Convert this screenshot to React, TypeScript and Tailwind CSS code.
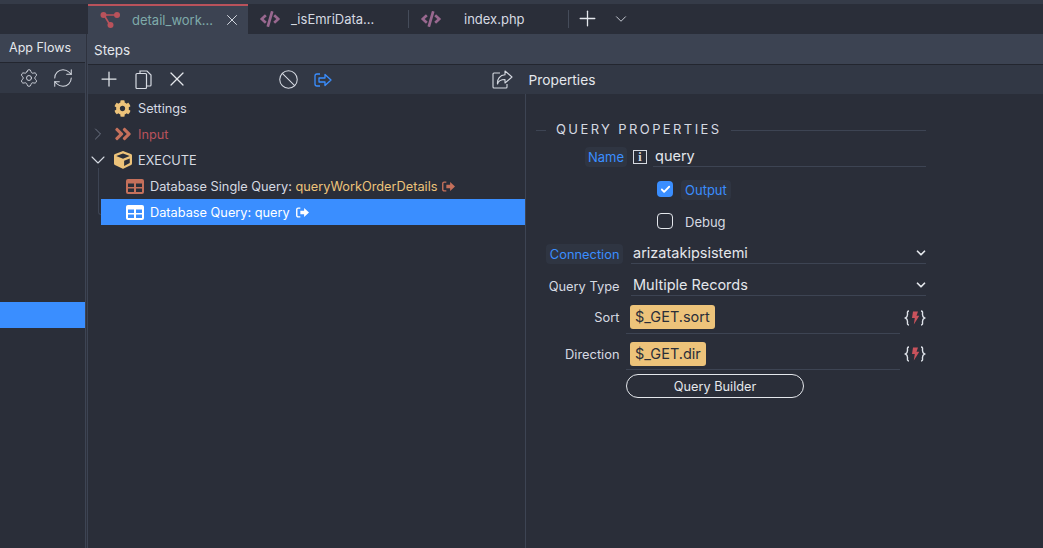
import React from "react";
import { FaCog, FaCube, FaAngleDoubleRight, FaCode } from "react-icons/fa";
import { Settings, RefreshCw, Ban, Plus, X, ChevronDown, ChevronRight, Check } from "lucide-react";

function FlowIcon() {
  return (
    <svg width="20" height="18" viewBox="0 0 20 18" fill="#b9525b" stroke="#b9525b">
      <path d="M4 4H16M4 4L10 14" strokeWidth="1.6" fill="none" />
      <circle cx="3.5" cy="4" r="3" stroke="none" />
      <circle cx="17" cy="4" r="3" stroke="none" />
      <circle cx="10.5" cy="14" r="3" stroke="none" />
    </svg>
  );
}

function CopyIcon() {
  return (
    <svg width="17" height="20" viewBox="0 0 17 20" fill="none" stroke="#d6dae2" strokeWidth="1.2">
      <path d="M5 3.5V1h7l4 4v10a1 1 0 0 1-1 1h-3" />
      <rect x="1" y="3.5" width="10.5" height="15" rx="1" />
    </svg>
  );
}

function ExitIcon({ color, size = 18 }: { color: string; size?: number }) {
  return (
    <svg width={size} height={size * 0.78} viewBox="0 0 18 14" fill="none" stroke={color} strokeWidth="1.3" strokeLinejoin="round">
      <path d="M6 1H3a2 2 0 0 0-2 2v8a2 2 0 0 0 2 2h3" />
      <path d="M5 5h6V1.5L17 7l-6 5.5V9H5z" />
    </svg>
  );
}

function SmallExit({ color }: { color: string }) {
  return (
    <svg width="13" height="11" viewBox="0 0 12 10" fill={color}>
      <path d="M4 1H2a1.3 1.3 0 0 0-1.3 1.3v5.4A1.3 1.3 0 0 0 2 9h2" fill="none" stroke={color} strokeWidth="1.3" />
      <path d="M4 3.4h3.5V.8L12 5 7.500 9.200V6.600H4z" />
    </svg>
  );
}

function ShareIcon() {
  return (
    <svg width="21" height="19" viewBox="0 0 21 19" fill="none" stroke="#d6dae2" strokeWidth="1.1" strokeLinejoin="round">
      <path d="M8 3H2a1 1 0 0 0-1 1v13a1 1 0 0 0 1 1h12a1 1 0 0 0 1-1v-3" />
      <path d="M13 1l7 6-7 6V9.500C9 9.500 6.500 10.500 5.500 14 5 9 8 5 13 4.800z" />
    </svg>
  );
}

function TableIcon({ frame, cell }: { frame: string; cell: string }) {
  return (
    <svg width="18" height="15" viewBox="0 0 18 15">
      <rect width="18" height="15" rx="2" fill={frame} />
      <rect x="2" y="4.500" width="6" height="3.500" fill={cell} />
      <rect x="10" y="4.500" width="6" height="3.500" fill={cell} />
      <rect x="2" y="9.500" width="6" height="3.500" fill={cell} />
      <rect x="10" y="9.500" width="6" height="3.500" fill={cell} />
    </svg>
  );
}

function FlashIcon() {
  return (
    <svg width="22" height="16" viewBox="0 0 22 16" fill="none">
      <path d="M5 1C3 1 3.500 2.500 3.500 4.500S3.500 7 1.500 8c2 1 2 1.500 2 3.500S3 15 5 15" stroke="#dfe3ea" strokeWidth="1.400" />
      <path d="M17 1c2 0 1.500 1.500 1.500 3.500S18.500 7 20.500 8c-2 1-2 1.500-2 3.500S19 15 17 15" stroke="#dfe3ea" strokeWidth="1.400" />
      <path d="M9 1.500h5l-1.500 4.200h2.800L9.800 14.500l1-6.500H8z" fill="#c9525c" />
    </svg>
  );
}

function Tab({ icon, label, active, textX, end }: { icon: React.ReactNode; label: string; active?: boolean; textX: string; end: string }) {
  return (
    <div className={active ? `flex h-full items-center border-t-2 border-[#b9525b] bg-[#3c4352] pl-3 ${end}` : `flex h-full items-center pl-3 ${end}`}>
      <span className="flex w-5 shrink-0 justify-center">{icon}</span>
      <span className={`${textX} pt-px text-[13px] ${active ? "text-[#7fabaa]" : "text-[#d6dae2]"}`}>{label}</span>
      {active && <X size={18} strokeWidth={1.300} className="ml-2 text-[#d6dae2]" />}
    </div>
  );
}

function Row({ selected, children, pad }: { selected?: boolean; children: React.ReactNode; pad: string }) {
  return (
    <div className={`flex h-[26px] items-center whitespace-nowrap text-[12.750px] [&>span]:pt-px ${pad} ${selected ? "ml-[13px] bg-[#3a8eff] text-white" : "text-[#d6dae2]"}`}>
      {children}
    </div>
  );
}

function SelectRow({ label, blue, value, h }: { label: string; blue?: boolean; value: string; h: string }) {
  return (
    <div className={`flex items-end ${h}`}>
      <div className="flex w-[87px] shrink-0 justify-end">
        <span className={`rounded px-[3.500px] pt-px text-[12.850px] leading-[19px] ${blue ? "bg-[#2f3542] text-[#3a8eff]" : "text-[#d6dae2]"}`}>{label}</span>
      </div>
      <div className="ml-2 flex h-full flex-1 items-end border-b border-[#3d4453] pl-[2px]">
        <div className="flex h-5 w-full items-center justify-between text-[14.500px] leading-5 text-[#e4e7ec]">
          {value}
          <ChevronDown size={14} strokeWidth={3} className="-mr-[1.500px] text-[#e4e7ec]" />
        </div>
      </div>
    </div>
  );
}

function ChipRow({ label, value, h, pt }: { label: string; value: string; h: string; pt: string }) {
  return (
    <div className={`flex items-center ${h}`}>
      <div className={`flex w-[87px] shrink-0 justify-end ${pt}`}>
        <span className="px-[3.500px] text-[12.850px] leading-[19px] text-[#d6dae2]">{label}</span>
      </div>
      <div className={`ml-[3px] flex h-full flex-1 items-center border-b border-[#3d4453] pl-[4px] ${pt}`}>
        <span className="flex h-6 items-center rounded-[3px] bg-[#edc37a] px-[5px] text-[14.500px] text-[#2a2e39]">{value}</span>
      </div>
      <span className={`ml-[4px] ${pt}`}><FlashIcon /></span>
    </div>
  );
}

export default function App() {
  return (
    <div className="flex h-[548px] w-[1043px] flex-col overflow-hidden bg-[#2a2e39] font-['Inter',sans-serif] text-[#d6dae2]">
      <div className="h-1 shrink-0 bg-[#353b48]" />
      <div className="flex h-[30px] shrink-0 items-center">
        <div className="w-[88px] shrink-0" />
        <Tab active icon={<FlowIcon />} label="detail_work..." textX="ml-3 w-[83px]" end="w-[160px]" />
        <Tab icon={<FaCode size={20} color="#99688f" />} label="_isEmriData..." textX="ml-[11px] w-[90px]" end="w-[160px]" />
        <div className="h-[18px] w-px bg-[#454c5a]" />
        <Tab icon={<FaCode size={20} color="#99688f" />} label="index.php" textX="ml-[23px] w-[84px]" end="w-[159px]" />
        <div className="h-[18px] w-px bg-[#454c5a]" />
        <Plus size={25} strokeWidth={1.250} className="-mt-px ml-[6px] text-[#e4e7ec]" />
        <ChevronDown size={18} strokeWidth={1.200} className="-mt-px ml-[12px] text-[#d6dae2]" />
      </div>

      <div className="flex min-h-0 flex-1">
        <div className="flex w-[85px] shrink-0 flex-col">
          <div className="flex h-[28px] items-center justify-end bg-[#3c4352] pr-[14px] pt-px text-[12.500px] text-[#e4e7ec]">App Flows</div>
          <div className="h-px bg-[#23262f]" />
          <div className="flex h-[30px] items-center justify-end gap-[13px] bg-[#323845] pr-[11px]">
            <Settings size={20} strokeWidth={1.100} className="text-[#d6dae2]" />
            <RefreshCw size={22} strokeWidth={1.100} className="text-[#d6dae2]" />
          </div>
          <div className="flex-1 pt-[209px]">
            <div className="h-[26px] bg-[#3a8eff]" />
          </div>
        </div>
        <div className="flex w-[3px] shrink-0 justify-between bg-[#2e323e]">
          <div className="w-px bg-[#3d4453]" />
          <div className="w-px bg-[#3d4453]" />
        </div>

        <div className="flex min-w-0 flex-1 flex-col">
          <div className="flex h-[30px] shrink-0 items-center bg-[#3c4352] pl-[6px] pt-[3px] text-[13.500px] text-[#e4e7ec]">Steps</div>
          <div className="h-px shrink-0 bg-[#23262f]" />
          <div className="flex h-[29px] shrink-0 items-center bg-[#323845]">
            <Plus size={24} strokeWidth={1.250} className="-mt-px ml-[9px] text-[#e4e7ec]" />
            <span className="ml-[13.500px]"><CopyIcon /></span>
            <X size={24} strokeWidth={1.200} className="-mt-px ml-[13px] text-[#e4e7ec]" />
            <Ban size={21} strokeWidth={1.200} className="ml-[89.500px] text-[#d6dae2]" />
            <span className="ml-[14.500px] pt-px"><ExitIcon color="#3a8eff" /></span>
            <span className="ml-[160px]"><ShareIcon /></span>
            <span className="ml-[16px] pt-px text-[13.750px] text-[#e4e7ec]">Properties</span>
          </div>

          <div className="flex min-h-0 flex-1">
            <div className="relative w-[438px] shrink-0 border-r border-[#3d4453] pt-px">
              <div className="absolute left-[10px] top-[74px] h-[47px] w-[3px] rounded-bl border-b border-l border-[#3d4453]" />
              <Row pad="pl-[26px]">
                <FaCog size={17} color="#edc37a" />
                <span className="ml-[7px]">Settings</span>
              </Row>
              <Row pad="pl-0">
                <ChevronRight size={20} strokeWidth={1.200} className="text-[#6e7585]" />
                <FaAngleDoubleRight size={20} color="#c5705b" className="ml-[5px] -mr-[1px]" />
                <span className="ml-[6px] text-[#b9525b]">Input</span>
              </Row>
              <Row pad="pl-0">
                <ChevronDown size={24} strokeWidth={1.100} className="-ml-[2px] text-[#d6dae2]" />
                <FaCube size={18} color="#edc37a" className="ml-[4px]" />
                <span className="ml-[6px]">EXECUTE</span>
              </Row>
              <Row pad="pl-[38px]">
                <TableIcon frame="#c5705b" cell="#2a2e39" />
                <span className="ml-[6px]">Database Single Query: <span className="text-[#edc37a]">queryWorkOrderDetails</span></span>
                <span className="ml-[5px]"><SmallExit color="#c5705b" /></span>
              </Row>
              <Row selected pad="pl-[25px]">
                <TableIcon frame="#ffffff" cell="#3a8eff" />
                <span className="ml-[6px]">Database Query: query</span>
                <span className="ml-[6px]"><SmallExit color="#ffffff" /></span>
              </Row>
            </div>

            <div className="min-w-0 flex-1 pl-[10px] pr-[117px] pt-[28px]">
              <div className="flex h-[16px] items-center">
                <div className="h-px w-[10px] bg-[#3d4453]" />
                <span className="ml-[10px] text-[13px] tracking-[2.400px] text-[#d6dae2]">QUERY PROPERTIES</span>
                <div className="ml-[9px] h-px flex-1 bg-[#3d4453]" />
              </div>
              <div className="flex h-[29px] items-end">
                <div className="flex w-[91px] shrink-0 justify-end">
                  <span className="rounded bg-[#2f3542] px-[3px] text-[13px] leading-5 text-[#3a8eff]">Name</span>
                </div>
                <span className="mb-[3px] ml-[6px] flex h-[14px] w-[14px] shrink-0 items-center justify-center border border-[#d6dae2] font-['Liberation_Serif',serif] text-[12px] font-bold leading-none">i</span>
                <div className="ml-[6px] flex h-[26px] flex-1 items-center border-b border-[#3d4453] pl-[2px] pt-[5px] text-[14.500px] text-[#e4e7ec]">query</div>
              </div>
              <div className="ml-[121px] mt-[6px] flex h-[32px] items-center">
                <span className="flex h-4 w-4 items-center justify-center rounded bg-[#3a8eff]"><Check size={11} strokeWidth={4} className="text-white" /></span>
                <span className="ml-2 mt-[2px] rounded bg-[#2f3542] px-1 text-[13px] leading-5 text-[#3a8eff]">Output</span>
              </div>
              <div className="ml-[121px] flex h-[31px] items-center">
                <span className="h-4 w-4 rounded border border-[#e4e7ec]" />
                <span className="ml-2 mt-[3px] px-1 text-[13px] leading-5 text-[#d6dae2]">Debug</span>
              </div>
              <SelectRow label="Connection" blue value="arizatakipsistemi" h="h-[28px]" />
              <SelectRow label="Query Type" value="Multiple Records" h="h-[32px]" />
              <ChipRow label="Sort" value="$_GET.sort" h="h-[38px]" pt="pt-[5px]" />
              <ChipRow label="Direction" value="$_GET.dir" h="h-[36px]" pt="pt-[4px]" />
              <button className="ml-[90px] mt-[4px] flex h-[24px] w-[178px] items-center justify-center rounded-full border border-[#e4e7ec] pt-px text-[12.750px] text-[#e4e7ec]">Query Builder</button>
            </div>
          </div>
        </div>
      </div>
    </div>
  );
}
